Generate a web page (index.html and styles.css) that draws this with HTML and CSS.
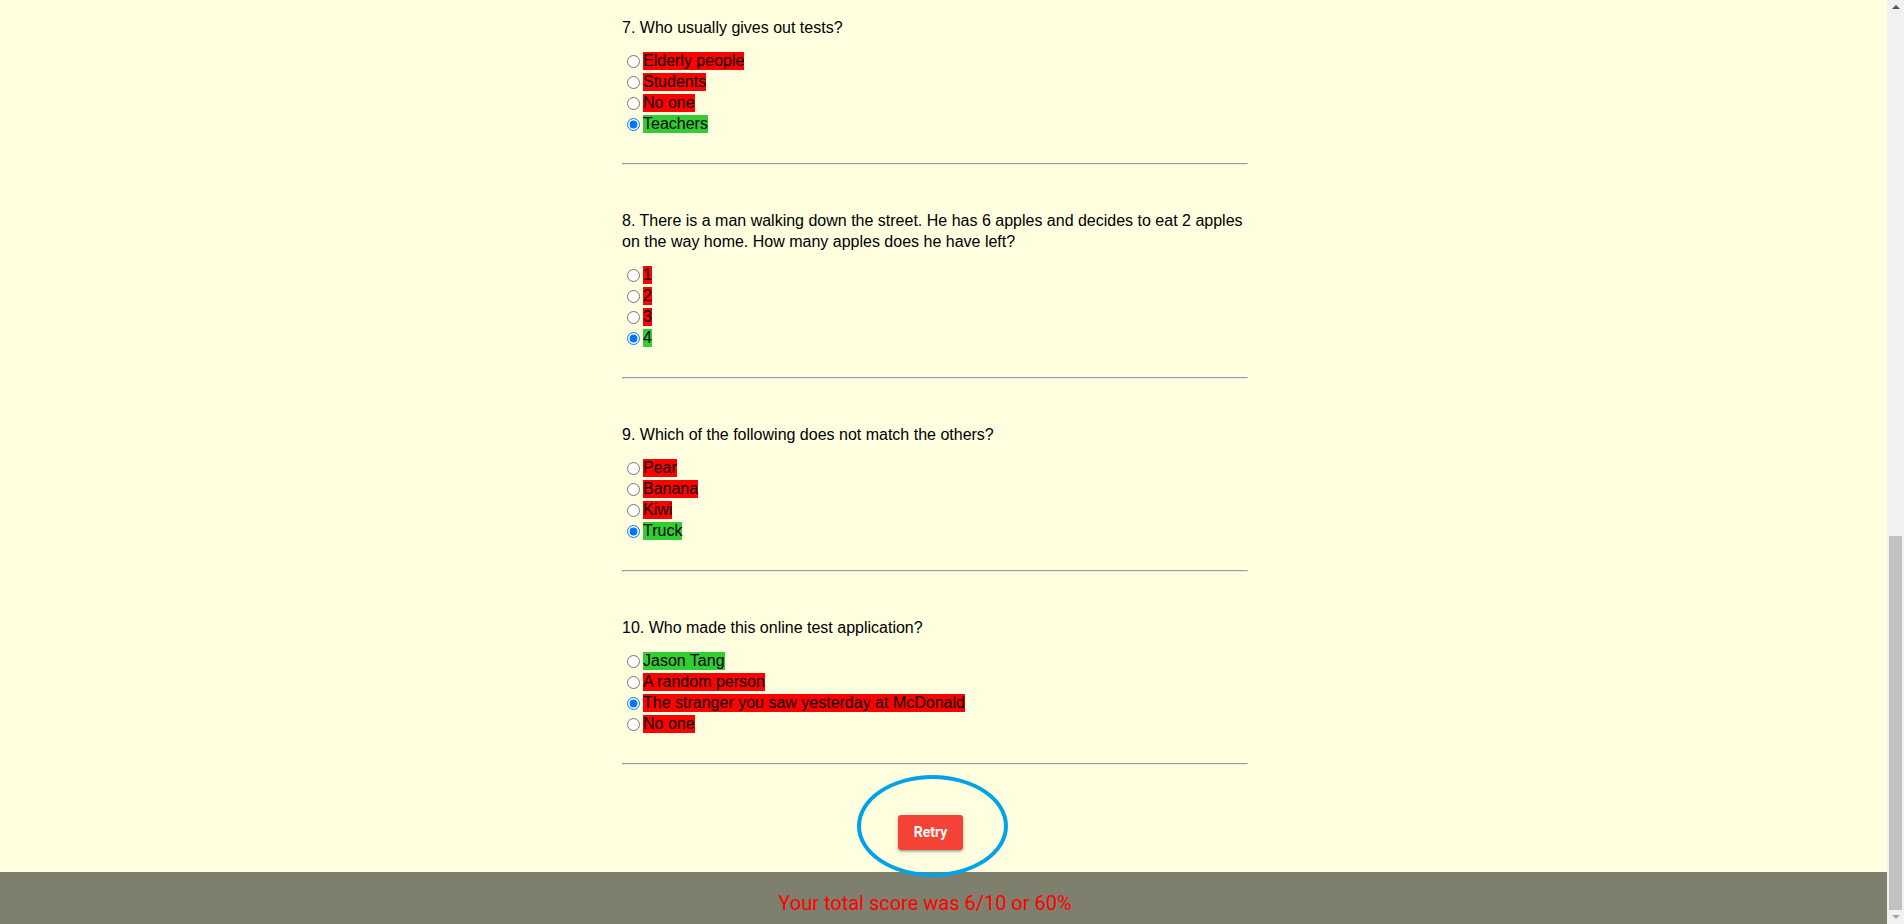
FILE: index.html
```html
<!DOCTYPE html>
<html lang="en">
<head>
<meta charset="utf-8">
<title>Online Test</title>
<link rel="stylesheet" href="styles.css">
</head>
<body>
<div class="window">
  <div class="viewport">
    <main class="page">
      <div class="quiz">
        <section class="question">
          <p class="qtext">7. Who usually gives out tests?</p>
          <div class="options">
            <div class="option"><input type="radio" name="q7"><label class="wrong">Elderly people</label></div>
            <div class="option"><input type="radio" name="q7"><label class="wrong">Students</label></div>
            <div class="option"><input type="radio" name="q7"><label class="wrong">No one</label></div>
            <div class="option"><input type="radio" name="q7" checked><label class="right">Teachers</label></div>
          </div>
          <hr class="divider">
        </section>
        <section class="question">
          <p class="qtext">8. There is a man walking down the street. He has 6 apples and decides to eat 2 apples on the way home. How many apples does he have left?</p>
          <div class="options">
            <div class="option"><input type="radio" name="q8"><label class="wrong">1</label></div>
            <div class="option"><input type="radio" name="q8"><label class="wrong">2</label></div>
            <div class="option"><input type="radio" name="q8"><label class="wrong">3</label></div>
            <div class="option"><input type="radio" name="q8" checked><label class="right">4</label></div>
          </div>
          <hr class="divider">
        </section>
        <section class="question">
          <p class="qtext">9. Which of the following does not match the others?</p>
          <div class="options">
            <div class="option"><input type="radio" name="q9"><label class="wrong">Pear</label></div>
            <div class="option"><input type="radio" name="q9"><label class="wrong">Banana</label></div>
            <div class="option"><input type="radio" name="q9"><label class="wrong">Kiwi</label></div>
            <div class="option"><input type="radio" name="q9" checked><label class="right">Truck</label></div>
          </div>
          <hr class="divider">
        </section>
        <section class="question">
          <p class="qtext">10. Who made this online test application?</p>
          <div class="options">
            <div class="option"><input type="radio" name="q10"><label class="right">Jason Tang</label></div>
            <div class="option"><input type="radio" name="q10"><label class="wrong">A random person</label></div>
            <div class="option"><input type="radio" name="q10" checked><label class="wrong">The stranger you saw yesterday at McDonald</label></div>
            <div class="option"><input type="radio" name="q10"><label class="wrong">No one</label></div>
          </div>
          <hr class="divider">
        </section>
        <div class="actions"><button class="btn-retry" type="button">Retry</button></div>
      </div>
    </main>
    <footer class="score-bar">Your total score was 6/10 or 60%</footer>
  </div>
  <div class="scrollbar">
    <div class="sb-arrow sb-up"><span class="tri-up"></span></div>
    <div class="sb-track"><div class="sb-thumb"></div></div>
    <div class="sb-arrow sb-down"><span class="tri-down"></span></div>
  </div>
</div>
<div class="annotation"></div>
</body>
</html>
```

FILE: styles.css
```css
html, body {
  margin: 0;
  height: 100%;
  overflow: hidden;
}

body {
  background: #ffffe0;
  font-family: "Liberation Sans", Arial, sans-serif;
  font-size: 16px;
  color: #000;
}

.window {
  display: flex;
  height: 924px;
}

.viewport {
  flex: 1;
  min-width: 0;
  display: flex;
  flex-direction: column;
}

.page {
  flex: 1;
  overflow: hidden;
  padding: 17px 17px 0 0;
}

.quiz {
  width: 626px;
  margin: 0 auto;
}

.question + .question {
  margin-top: 45px;
}

.qtext {
  margin: 0 0 12px;
  line-height: 21px;
}

.option {
  display: flex;
  align-items: center;
  height: 21px;
}

.option input {
  width: 13px;
  height: 13px;
  margin: 1px 3px 0 5px;
  flex: none;
}

.option label {
  line-height: 18px;
}

.wrong {
  background: #ff0000;
}

.right {
  background: #32cd32;
}

.divider {
  margin: 29px 0 0;
}

.actions {
  margin-top: 50px;
  display: flex;
  justify-content: center;
  padding-right: 9px;
}

.btn-retry {
  height: 35px;
  padding: 0 16px;
  border: none;
  border-radius: 3px;
  background: #f44336;
  color: #fff;
  font-family: Roboto, "Liberation Sans", sans-serif;
  font-weight: 700;
  font-size: 14px;
  line-height: 35px;
  box-shadow: 0 2px 2px 0 rgba(0,0,0,0.14), 0 3px 1px -2px rgba(0,0,0,0.12), 0 1px 5px 0 rgba(0,0,0,0.2);
  cursor: pointer;
}

.score-bar {
  height: 52px;
  box-sizing: border-box;
  padding: 20px 37px 0 0;
  background: #7f7f6d;
  color: #ff0000;
  font-family: Roboto, "Liberation Sans", sans-serif;
  font-size: 20px;
  line-height: 23px;
  text-align: center;
}

.scrollbar {
  width: 17px;
  flex: none;
  background: #f1f1f1;
  display: flex;
  flex-direction: column;
}

.sb-arrow {
  height: 14px;
  display: flex;
  align-items: center;
  justify-content: center;
}

.tri-up {
  width: 0;
  height: 0;
  border-left: 4px solid transparent;
  border-right: 4px solid transparent;
  border-bottom: 4px solid #505050;
}

.tri-down {
  width: 0;
  height: 0;
  border-left: 4px solid transparent;
  border-right: 4px solid transparent;
  border-top: 4px solid #a3a3a3;
}

.sb-track {
  flex: 1;
  display: flex;
  flex-direction: column;
  justify-content: flex-end;
  padding: 0 2px;
}

.sb-thumb {
  height: 374px;
  background: #c1c1c1;
}

.annotation {
  position: absolute;
  left: 857px;
  top: 775px;
  width: 151px;
  height: 102px;
  box-sizing: border-box;
  border: 4px solid #00a2e8;
  border-radius: 50%;
  pointer-events: none;
}
```
